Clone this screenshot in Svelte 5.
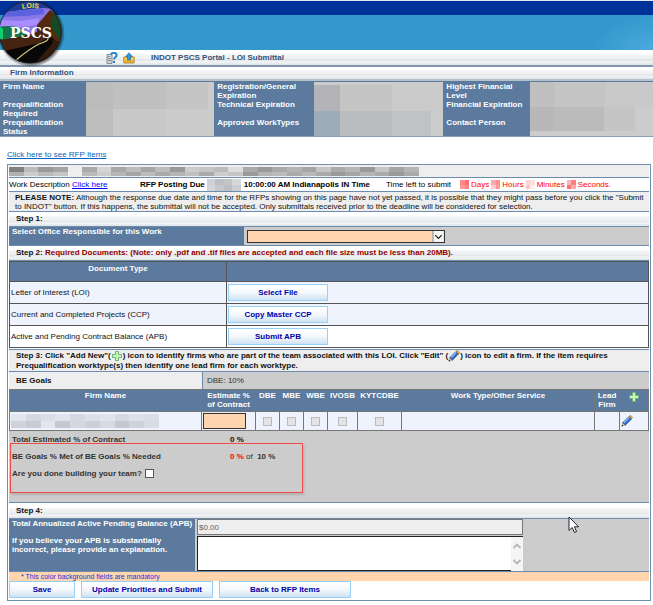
<script>
  const firmColumns = [
    {
      labels: ['Firm Name', 'Prequalification Required', 'Prequalification Status'],
      cells: [
        [27, [[27, '#bcbcbc'], [53, '#c0c0c0'], [42, '#c5c5c5'], [6, '#cbcbcb']]],
        [27, [[27, '#bebebe'], [53, '#c8c8c8'], [48, '#cbcbcb']]]
      ]
    },
    {
      labels: ['Registration/General Expiration', 'Technical Expiration', 'Approved WorkTypes'],
      cells: [
        [3, [[1, '#cccccc']]],
        [26, [[26, '#b4b4b8'], [52, '#c5c5c5'], [51, '#cacaca']]],
        [25, [[26, '#9eacba'], [52, '#babcbe'], [39, '#c0c2c4'], [12, '#cccccc']]]
      ]
    },
    {
      labels: ['Highest Financial Level', 'Financial Expiration', 'Contact Person'],
      cells: [
        [25, [[25, '#c0c0c0'], [50, '#c5c5c5'], [48, '#c9c9c9']]],
        [24, [[25, '#b8b8b8'], [49, '#bbbbbb'], [31, '#c5c5c5'], [18, '#cccccc']]],
        [5, [[1, '#cccccc']]]
      ]
    }
  ];

  const even = (colors) => [1, colors.map((c) => [1, c])];
  const titleCells = [
    even(['#808080', '#bbb', '#999', '#a5a5a5', '#eee', '#aaa', '#d5d5d5', '#a8a8a8', '#bbb', '#a5a5a5', '#bcbcbc', '#999', '#ccc', '#c5c5c5', '#bbb', '#ddd', '#aaa', '#999', '#aaa', '#b5b5b5', '#a5a5a5', '#c5c5c5', '#aaa', '#b5b5b5', '#999', '#c5c5c5', '#a5a5a5', '#b5b5b5']),
    even(['#b0b0b0', '#ccc', '#bbb', '#c5c5c5', '#eee', '#bbb', '#ccc', '#b5b5b5', '#a5a5a5', '#bbb', '#aaa', '#b5b5b5', '#c0c0c0', '#aaa', '#ccc', '#c5c5c5', '#999', '#b5b5b5', '#bbb', '#aaa', '#b8b8b8', '#aaa', '#999', '#a5a5a5', '#b5b5b5', '#aaa', '#999', '#aaa'])
  ];
  const dateCells = [
    even(['#cfd2d5', '#bbbec2', '#c2c5c8', '#d5d7d9']),
    even(['#d2d5d7', '#c5c8ca', '#bbbec2', '#cbced0'])
  ];
  const firmCells = [
    even(['#e3e6ef', '#d4d8e1', '#dadee7', '#e0e3ed', '#d5d9e2', '#dce0e9', '#e0e4ed', '#d5d9e2', '#dde1ea', '#dadee7']),
    even(['#d0d3dc', '#c9ccd4', '#e3e6ef', '#c5c8d0', '#d4d7df', '#cdd0d8', '#d6dae3', '#c5c8d0', '#cfd3dc', '#d8dce5'])
  ];
  const timeParts = [
    { unit: 'Days', cells: [even(['#ff8888', '#ff7070']), even(['#ff9999', '#ff8080'])] },
    { unit: 'Hours', cells: [even(['#ffaaaa', '#ff9090']), even(['#ffcccc', '#ff9999'])] },
    { unit: 'Minutes', cells: [even(['#ffd5d5', '#ffdddd']), even(['#ffc5c5', '#ffeeee'])] },
    { unit: 'Seconds.', cells: [even(['#ffb5b5', '#ff8080']), even(['#ff7070', '#ffaaaa'])] }
  ];

  const documents = [
    { name: 'Letter of Interest (LOI)', action: 'Select File' },
    { name: 'Current and Completed Projects (CCP)', action: 'Copy Master CCP' },
    { name: 'Active and Pending Contract Balance (APB)', action: 'Submit APB' }
  ];
  const certifications = ['DBE', 'MBE', 'WBE', 'IVOSB', 'KYTCDBE'];

  let doneBuilding = $state(false);
  let explanation = $state('');
</script>

{#snippet mosaic(rows)}
  <span class="mosaic">
    {#each rows as [height, cells]}
      <span class="mosaic-row" style="flex: {height}">
        {#each cells as [width, color]}
          <span style="flex: {width}; background: {color}"></span>
        {/each}
      </span>
    {/each}
  </span>
{/snippet}

{#snippet pencil()}
  <svg class="pencil" viewBox="0 0 12 12" width="12" height="12" aria-hidden="true">
    <path d="M1.500 8l6.500-6.500 2.500 2.300L4 10.500z" fill="#2f6fd0" stroke="#26354d" stroke-width=".8" />
    <path d="M3 7.500l5.300-5.200" stroke="#8cc3ff" stroke-width="1.200" />
    <path d="M8 1.500L9.500.3l2.200 2.200-1.200 1.300z" fill="#f0b050" stroke="#7a5220" stroke-width=".5" />
    <path d="M.8 11.200l.7-3.200L4 10.500z" fill="#e8c88a" />
    <path d="M.5 11.600l.5-2 1.500 1.400z" fill="#111" />
  </svg>
{/snippet}

{#snippet plus()}
  <svg class="plus" viewBox="0 0 12 12" width="12" height="12" aria-hidden="true">
    <path d="M4.500 1.500h3v3h3v3h-3v3h-3v-3h-3v-3h3z" fill="#c9f5c0" stroke="#6cb571" stroke-width="1" />
  </svg>
{/snippet}

<div class="page">
  <header>
    <div class="navy"></div>
    <div class="sky"></div>
    <div class="toolbar">
      <button class="icon-btn" aria-label="Help">
        <svg viewBox="0 0 12 12" width="12" height="12">
          <path d="M1 2.500h5v9H1z" fill="#d5d5d5" stroke="#777" stroke-width=".8" />
          <path d="M2 4.500h2M2 6.500h3M2 8.500h3" stroke="#777" stroke-width=".8" />
          <path d="M5 3c.2-3 5.600-3 5.600.2 0 2-2.500 2.200-2.500 4.300" fill="none" stroke="#2580cf" stroke-width="1.900" />
          <path d="M7 9h2v2H7z" fill="#2580cf" />
        </svg>
      </button>
      <button class="icon-btn" aria-label="Upload">
        <svg viewBox="0 0 12 12" width="12" height="12">
          <path d="M.8 5h10.400v6H.8z" fill="#f7cf55" stroke="#a27618" stroke-width=".8" />
          <path d="M1.500 8.500h9v2h-9z" fill="#e2a52a" />
          <path d="M6 .8L9.300 4.500H7.500V8h-3V4.500H2.700z" fill="#3299df" stroke="#1a5f9c" stroke-width=".6" />
        </svg>
      </button>
      <h1>INDOT PSCS Portal - LOI Submittal</h1>
    </div>
    <svg class="logo" viewBox="0 0 66 66" width="66" height="66" role="img" aria-label="LOIS PSCS">
      <defs>
        <clipPath id="disc"><circle cx="30" cy="31" r="31" /></clipPath>
        <path id="arc" d="M17 9Q30 5 44 9" />
        <radialGradient id="shade" cx=".5" cy=".5" r=".5">
          <stop offset=".86" stop-color="#000" stop-opacity=".75" />
          <stop offset="1" stop-color="#000" stop-opacity="0" />
        </radialGradient>
      </defs>
      <circle cx="31" cy="32" r="34" fill="url(#shade)" />
      <g clip-path="url(#disc)">
        <path d="M0 0h64v64H0z" fill="#8a78e8" />
        <path d="M0 0h64v9L44 7 22 9 0 12z" fill="#1d3d94" />
        <path d="M0 12l22-3 22-1v5l-18 2-26 1z" fill="#5b62e0" />
        <path d="M0 19l20 1 20-3-3 7-17 2-20-1z" fill="#a98cff" />
        <path d="M0 26q12-3 24 3l6 10H0z" fill="#157548" />
        <path d="M0 26l3 2v10H0z" fill="#10d070" />
        <path d="M37 24L50 9l14 10v44H37z" fill="#55290f" />
        <path d="M55 10l10 14v22l-9-12-6-10z" fill="#174a24" />
        <path d="M0 39l24-4 16-5 12 10-6 6L0 54z" fill="#462412" />
        <path d="M0 64l4-14 36-8 10-7 6 5-8 24z" fill="#080808" />
        <path d="M50 38q6 3-1 8L34 64h24l6-22z" fill="#321a0d" />
        <path d="M48 37q1 3-9 6-10 5-24 17" fill="none" stroke="#d1c77e" stroke-width="1.300" />
      </g>
      <circle cx="30" cy="31" r="31" fill="none" stroke="#141414" stroke-opacity=".7" />
      <text class="logo-top"><textPath href="#arc" startOffset="50%" text-anchor="middle">LOIS</textPath></text>
      <text class="logo-name" x="31" y="37" text-anchor="middle">PSCS</text>
    </svg>
  </header>

  <h2 class="firm-bar">Firm Information</h2>
  <table class="firm">
    <colgroup>
      <col class="l1" /><col class="v1" /><col class="l2" /><col class="v2" /><col class="l3" /><col />
    </colgroup>
    <tbody>
      {#each [0, 1, 2] as row}
        <tr>
          {#each firmColumns as column}
            <th>{column.labels[row]}</th>
            {#if row === 0}
              <td rowspan="3">{@render mosaic(column.cells)}</td>
            {/if}
          {/each}
        </tr>
      {/each}
    </tbody>
  </table>

  <a class="rfp-link" href="#rfp">Click here to see RFP Items</a>

  <main>
    <div class="title-row"><div class="title-mosaic">{@render mosaic(titleCells)}</div></div>
    <div class="work-row">
      <span class="work">Work Description <a href="#work">Click here</a></span>
      <b>RFP Posting Due</b>
      <span class="date">{@render mosaic(dateCells)}</span>
      <b class="due">10:00:00 AM Indianapolis IN Time</b>
      <span class="left">Time left to submit</span>
      {#each timeParts as part}
        <span class="time"><span class="digits">{@render mosaic(part.cells)}</span>{part.unit}</span>
      {/each}
    </div>
    <p class="note">
      <b>PLEASE NOTE:</b> Although the response due date and time for the RFPs showing on this page have not yet passed, it is possible that they might pass before you click the "Submit to INDOT" button. If this happens, the submittal will not be accepted. Only submittals received prior to the deadline will be considered for selection.
    </p>

    <h3>Step 1:</h3>
    <div class="office">
      <label for="office">Select Office Responsible for this Work</label>
      <div class="field">
        <div class="select-wrap">
          <select id="office"><option></option></select>
          <svg viewBox="0 0 12 12" width="12" height="12" aria-hidden="true">
            <path d="M0 0h12v12H0z" fill="#f4f4f4" />
            <path d="M.5 0v12" stroke="#777" />
            <path d="M3 4.500l3.500 3.500L10 4.500" fill="none" stroke="#222" stroke-width="1.400" />
          </svg>
        </div>
      </div>
    </div>

    <h3>Step 2: <span class="required">Required Documents: (Note: only .pdf and .tif files are accepted and each file size must be less than 20MB).</span></h3>
    <table class="docs">
      <thead>
        <tr><th class="doc-col">Document Type</th><th></th></tr>
      </thead>
      <tbody>
        {#each documents as doc}
          <tr>
            <td>{doc.name}</td>
            <td><button class="btn doc-btn">{doc.action}</button></td>
          </tr>
        {/each}
      </tbody>
    </table>

    <p class="step3">
      Step 3: Click "Add New"({@render plus()}) icon to identify firms who are part of the team associated with this LOI. Click "Edit" ({@render pencil()}) icon to edit a firm. If the item requires Prequalification worktype(s) then identify one lead firm for each worktype.
    </p>
    <div class="goals"><b>BE Goals</b><span>DBE: 10%</span></div>
    <table class="team">
      <colgroup>
        <col class="c-firm" /><col class="c-est" /><col class="c-cert" /><col class="c-cert" /><col class="c-cert" />
        <col class="c-ivosb" /><col class="c-kytc" /><col /><col class="c-lead" /><col class="c-add" />
      </colgroup>
      <thead>
        <tr>
          <th>Firm Name</th>
          <th>Estimate %<br />of Contract</th>
          {#each certifications as cert}
            <th>{cert}</th>
          {/each}
          <th>Work Type/Other Service</th>
          <th>Lead Firm</th>
          <th><button class="icon-btn" aria-label="Add New">{@render plus()}</button></th>
        </tr>
      </thead>
      <tbody>
        <tr>
          <td><div class="firm-mosaic">{@render mosaic(firmCells)}</div></td>
          <td><input class="estimate" type="text" aria-label="Estimate % of Contract" /></td>
          {#each certifications as cert}
            <td class="center"><input type="checkbox" disabled aria-label={cert} /></td>
          {/each}
          <td></td>
          <td></td>
          <td><button class="icon-btn" aria-label="Edit">{@render pencil()}</button></td>
        </tr>
      </tbody>
    </table>
    <div class="totals">
      <div class="total"><b>Total Estimated % of Contract</b><b class="dark">0 %</b></div>
      <div class="total"><b>BE Goals % Met of BE Goals % Needed</b><span><b class="red">0 %</b> of &nbsp;<b>10 %</b></span></div>
      <div class="total done">
        <label for="done">Are you done building your team?</label>
        <input id="done" type="checkbox" bind:checked={doneBuilding} />
      </div>
      <div class="callout"></div>
    </div>

    <h3>Step 4:</h3>
    <div class="balance">
      <div class="labels">
        <label for="apb">Total Annualized Active Pending Balance (APB)</label>
        <label for="explain">If you believe your APB is substantially incorrect, please provide an explanation.</label>
      </div>
      <div class="inputs">
        <input id="apb" type="text" value="$0.00" readonly />
        <div class="area">
          <textarea id="explain" bind:value={explanation}></textarea>
          <svg viewBox="0 0 12 34" width="12" height="34" aria-hidden="true">
            <path d="M0 0h12v34H0z" fill="#f5f5f5" />
            <path d="M2.500 11L6 7.500 9.500 11M2.500 23L6 26.500 9.500 23" fill="none" stroke="#b5b5b5" stroke-width="1.800" />
          </svg>
        </div>
      </div>
      <svg class="cursor" viewBox="0 0 12 18" width="12" height="18" aria-hidden="true">
        <path d="M1 1v13.500l3.200-3 2.200 5 2.200-1-2.200-4.700h4.200z" fill="#fff" stroke="#223" />
      </svg>
    </div>
    <div class="mandatory">* This color background fields are mandatory</div>
    <div class="actions">
      <button class="btn save">Save</button>
      <button class="btn">Update Priorities and Submit</button>
      <button class="btn">Back to RFP Items</button>
    </div>
  </main>
</div>

<style>
  :global(body) {
    background: #fff;
  }
  .page {
    --blue: #5b7a9e;
    --line: #6b8cae;
    --bar: linear-gradient(#fff 0, #fff 25%, #f1f3f4 35%, #edeff0 60%, #dfe4e6 65%, #f2f4f5 80%, #dce2e5 100%);
    font: 8px/9px "Liberation Sans", Arial, sans-serif;
    color: #222;
  }
  .page * {
    box-sizing: border-box;
  }
  h1, h2, h3, p {
    margin: 0;
    font-size: 8px;
    font-weight: bold;
  }
  button, input, select, textarea {
    font: inherit;
    margin: 0;
  }
  table {
    width: 100%;
    table-layout: fixed;
    border-collapse: collapse;
  }
  .mosaic {
    display: flex;
    flex-direction: column;
    width: 100%;
    height: 100%;
  }
  .mosaic-row {
    display: flex;
  }
  header {
    position: relative;
    border-top: 1px solid #dfe8f2;
  }
  .navy {
    height: 14px;
    background: #039;
  }
  .sky {
    height: 35px;
    background: radial-gradient(ellipse 60px 35px at 100% 100%, #4baadd, #39c);
  }
  .toolbar {
    display: flex;
    align-items: center;
    gap: 5px;
    height: 17px;
    padding-left: 106px;
    background: var(--bar);
    border-bottom: 2px solid #8296b2;
  }
  h1 {
    margin-left: 11px;
    color: #35507c;
  }
  .icon-btn {
    display: block;
    padding: 0;
    border: 0;
    background: none;
    line-height: 0;
    cursor: pointer;
  }
  .logo {
    position: absolute;
    top: 0;
    left: 0;
  }
  .logo-top {
    font: bold 7px "Liberation Sans", Arial, sans-serif;
    fill: #f0dc45;
  }
  .logo-name {
    font: bold 14px "DejaVu Serif", serif;
    fill: #fff;
  }
  .firm-bar {
    padding: 0 10px;
    line-height: 12px;
    color: #35507c;
    background: var(--bar);
    border-bottom: 2px solid #b5c1ca;
  }
  .firm {
    border-top: 1px solid var(--blue);
    border-bottom: 1px solid #8aa0b8;
  }
  .firm th {
    height: 18px;
    padding: 0 3px;
    color: #fff;
    background: var(--blue);
    text-align: left;
    vertical-align: top;
  }
  .firm td {
    height: 54px;
    padding: 0;
    background: #ccc;
  }
  .l1 { width: 13.200%; }
  .v1 { width: 19.600%; }
  .l2 { width: 15.300%; }
  .v2 { width: 19.800%; }
  .l3 { width: 13.300%; }
  .rfp-link {
    display: block;
    width: max-content;
    margin: 13px 7px 5px;
    color: #0563c1;
  }
  main {
    margin: 0 2px 0 7px;
    padding: 0 1px;
    border: 1px solid #6f8fae;
  }
  .title-row {
    height: 13px;
    padding: 2px 0;
    background: #eee;
    border-bottom: 1px solid var(--line);
  }
  .title-mosaic {
    width: 64%;
    height: 9px;
  }
  .work-row {
    display: flex;
    align-items: center;
    height: 14px;
    color: #000;
    border-bottom: 1px solid var(--line);
    white-space: nowrap;
  }
  .work {
    width: 131px;
  }
  .work a {
    color: #00f;
  }
  .date {
    width: 34px;
    height: 12px;
    margin: 0 3px 0 2px;
  }
  .left {
    margin: 0 9px 0 16px;
  }
  .time {
    display: flex;
    gap: 2px;
    margin-right: 2px;
    color: #f00;
  }
  .digits {
    width: 9px;
    height: 9px;
  }
  .note {
    padding: 1px 0 0 6px;
    line-height: 9px;
    font-weight: normal;
    color: #111;
    background: #eee;
    border-bottom: 1px solid var(--line);
  }
  h3 {
    padding: 0 7px;
    line-height: 14px;
    color: #111;
    background: var(--bar);
    border-bottom: 1px solid var(--line);
  }
  .required {
    color: #900000;
  }
  .office {
    display: flex;
    background: #ccc;
    border-bottom: 1px solid var(--line);
  }
  .office label {
    width: 235px;
    padding: 0 3px;
    font-weight: bold;
    color: #fff;
    background: var(--blue);
  }
  .field {
    padding: 3px 3px 2px;
  }
  .select-wrap {
    position: relative;
    width: 198px;
    height: 13px;
  }
  select {
    display: block;
    width: 100%;
    height: 13px;
    border: 1px solid #333;
    border-radius: 0;
    background: #ffd5ad;
    appearance: none;
  }
  .select-wrap svg {
    position: absolute;
    top: 1px;
    right: 1px;
    height: 11px;
    pointer-events: none;
  }
  .docs {
    color: #111;
  }
  .docs th {
    height: 20px;
    padding: 2px;
    color: #fff;
    background: var(--blue);
    border: 1px solid #555;
    vertical-align: top;
  }
  .doc-col {
    width: 217px;
  }
  .docs td {
    height: 22px;
    padding: 0 1px;
    background: #eff3fe;
    border: 1px solid #555;
  }
  .docs tr:last-child td {
    background: #fff;
  }
  .btn {
    height: 17px;
    padding: 0;
    color: #0000a8;
    font-weight: bold;
    white-space: nowrap;
    border: 1px solid #99d1f5;
    background: linear-gradient(#fff, #f4f8fc 50%, #cfe2f2);
    cursor: pointer;
  }
  .doc-btn {
    display: block;
    width: 100px;
  }
  .step3 {
    margin-top: 1px;
    padding: 1px 7px 0;
    line-height: 10px;
    color: #111;
    background: #eee;
    border-top: 1px solid var(--line);
    border-bottom: 1px solid var(--line);
  }
  .step3 svg {
    margin: -4px 0 -2px;
    vertical-align: -2px;
  }
  .goals {
    display: flex;
    line-height: 17px;
    color: #333;
    background: #ccc;
  }
  .goals b {
    width: 194px;
    padding-left: 7px;
    color: #111;
    background: #eee;
    border-right: 1px solid var(--line);
  }
  .goals span {
    padding-left: 4px;
  }
  .c-firm { width: 192px; }
  .c-est { width: 54px; }
  .c-cert { width: 24px; }
  .c-ivosb { width: 30px; }
  .c-kytc { width: 44px; }
  .c-lead { width: 25px; }
  .c-add { width: 29px; }
  .team th {
    height: 22px;
    padding: 1px 0;
    color: #fff;
    background: var(--blue);
    border: 1px solid #777;
    vertical-align: top;
  }
  .team th .icon-btn {
    margin: 0 auto;
  }
  .team td {
    height: 19px;
    padding: 0 1px;
    background: #eff3fe;
    border: 1px solid #777;
  }
  .team .center {
    text-align: center;
    line-height: 0;
  }
  .firm-mosaic {
    width: 148px;
    height: 14px;
  }
  .estimate {
    display: block;
    width: 43px;
    height: 16px;
    border: 1px solid #333;
    background: #ffd5ad;
  }
  input[type='checkbox'] {
    width: 9px;
    height: 9px;
    appearance: none;
    border: 1px solid #555;
    background: #fff;
  }
  input[type='checkbox']:checked {
    background: #35507c;
  }
  input[type='checkbox']:disabled {
    border-color: #bbb;
    background: #e4e4e4;
  }
  .totals {
    position: relative;
    height: 72px;
    margin-bottom: 1px;
    padding: 0 3px;
    color: #333;
    background: #ccc;
    border-bottom: 1px solid var(--line);
  }
  .total {
    display: grid;
    grid-template-columns: 218px 1fr;
    line-height: 17px;
  }
  .total .red {
    color: #f00;
  }
  .dark {
    color: #111;
  }
  .done {
    display: flex;
    align-items: center;
    gap: 3px;
    font-weight: bold;
  }
  .callout {
    position: absolute;
    top: 12px;
    left: 1px;
    width: 293px;
    height: 50px;
    border: 1px solid #f04a4a;
    box-shadow: 1px 2px 2px #9998;
    pointer-events: none;
  }
  .balance {
    position: relative;
    display: flex;
    background: #ccc;
    border-bottom: 1px solid var(--line);
  }
  .labels {
    display: flex;
    flex-direction: column;
    gap: 8px;
    width: 186px;
    padding-left: 3px;
    font-weight: bold;
    color: #fff;
    background: var(--blue);
    white-space: nowrap;
  }
  .labels label:last-child {
    white-space: normal;
  }
  .inputs {
    width: 328px;
    padding-left: 2px;
  }
  .inputs input {
    display: block;
    width: 100%;
    height: 16px;
    padding: 0 1px;
    color: #666;
    background: #eee;
    border: 1px solid #777;
  }
  .area {
    position: relative;
    margin-top: 1px;
  }
  textarea {
    display: block;
    width: 100%;
    height: 35px;
    padding: 1px;
    border: 1px solid #222;
    background: #fff;
    overflow: hidden;
    resize: none;
  }
  .area svg {
    position: absolute;
    top: 1px;
    right: 0;
  }
  .cursor {
    position: absolute;
    top: -3px;
    right: 69px;
  }
  .mandatory {
    padding-left: 12px;
    font-size: 7px;
    line-height: 9px;
    color: #2030e0;
    background: #ffd5ad;
  }
  .actions {
    display: flex;
    gap: 6px;
    padding: 0 0 2px;
  }
  .actions .btn {
    width: 132px;
  }
  .actions .save {
    width: 66px;
  }
</style>
